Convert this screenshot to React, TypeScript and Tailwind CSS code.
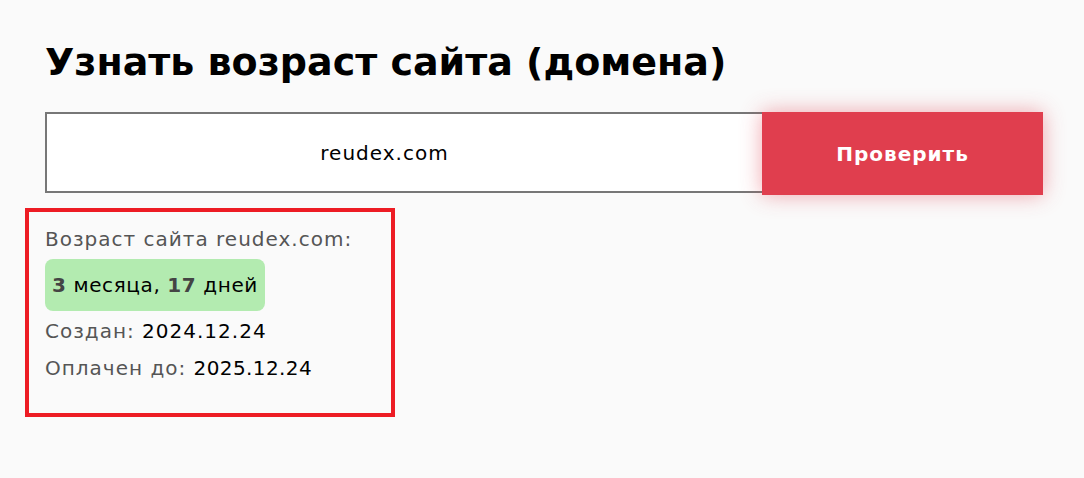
import { useState } from 'react'

export default function App() {
  const [domain, setDomain] = useState('reudex.com')

  return (
    <div className="min-h-[478px] bg-[#fafafa] font-['DejaVu_Sans',sans-serif] text-black">
      <div className="pl-[45px] pt-[34px]">
        <h1 className="text-[38px] font-bold leading-[56px]">Узнать возраст сайта (домена)</h1>

        <div className="mt-[22px] flex">
          <input
            value={domain}
            onChange={(e) => setDomain(e.target.value)}
            className="h-[81px] w-[717px] shrink-0 border-2 border-r-0 border-[#777] bg-white pr-[40px] text-center text-[20px] tracking-[1px] text-black outline-none"
          />
          <button className="h-[83px] w-[281px] shrink-0 bg-[#e03e4e] text-[20px] font-bold tracking-[1px] text-white shadow-[0_0_20px_rgba(224,62,78,0.45)]">
            Проверить
          </button>
        </div>
      </div>

      <div className="ml-[25px] mt-[13px] w-[370px] border-4 border-[#ed1c24] px-4 pb-[31px] pt-[13px] text-[20px] leading-[28px] tracking-[1px]">
        <div className="text-[#555]">Возраст сайта {domain}:</div>
        <div className="mt-[6px] inline-flex h-[52px] items-center rounded-lg bg-[#b3ebb0] px-[7px] tracking-[0.6px]">
          <span className="font-bold text-[#444]">3</span>&nbsp;месяца,&nbsp;<span className="font-bold text-[#444]">17</span>&nbsp;дней
        </div>
        <div className="mt-[6px] text-[#555]">
          Создан: <span className="text-black">2024.12.24</span>
        </div>
        <div className="mt-[9px] text-[#555]">
          Оплачен до: <span className="tracking-[0.4px] text-black">2025.12.24</span>
        </div>
      </div>
    </div>
  )
}
